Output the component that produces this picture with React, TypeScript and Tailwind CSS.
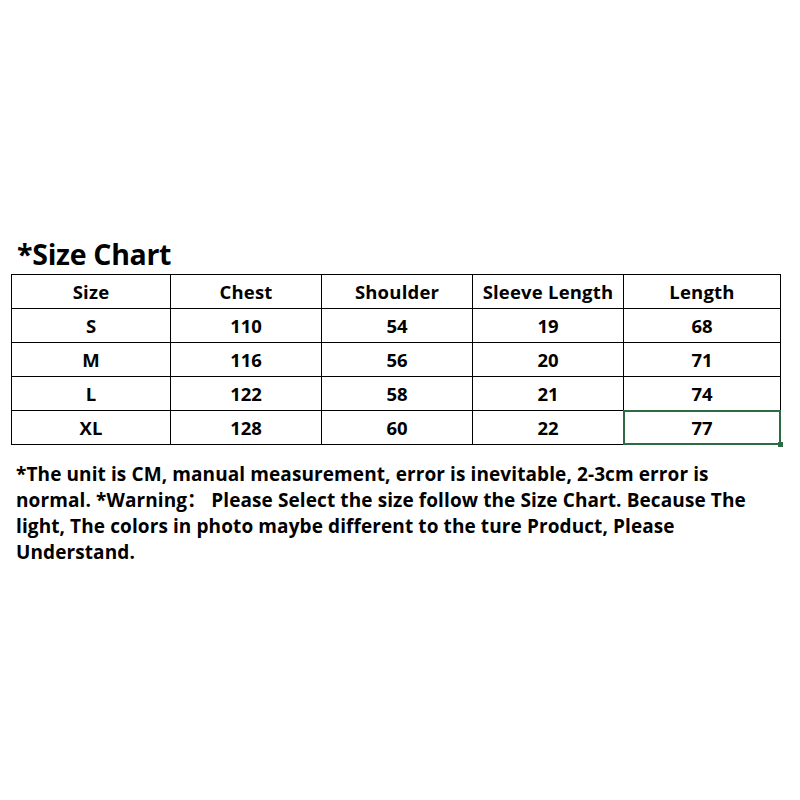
import React from 'react';

const columns = ['Size', 'Chest', 'Shoulder', 'Sleeve Length', 'Length'];
const widths = ['w-[159px]', 'w-[151px]', 'w-[151px]', 'w-[151px]', 'w-[157px]'];

const rows = [
  ['S', '110', '54', '19', '68'],
  ['M', '116', '56', '20', '71'],
  ['L', '122', '58', '21', '74'],
  ['XL', '128', '60', '22', '77'],
];

const noteLines = [
  '*The unit is CM, manual measurement, error is inevitable, 2-3cm error is',
  'normal. *Warning\uFF1A Please Select the size follow the Size Chart. Because The',
  'light, The colors in photo maybe different to the ture Product, Please',
  'Understand.',
];

export default function App() {
  return (
    <div className="h-[800px] w-[800px] bg-white text-black font-['Open_Sans','Noto_Sans_CJK_SC',sans-serif]">
      <div className="pt-[234px] pl-[17px]">
        <h1 className="h-[40px] text-[28.5px] font-bold leading-[40px] tracking-[-0.3px]">*Size Chart</h1>
      </div>

      <div className="ml-[11px] w-[770px]">
        <table className="border-collapse">
          <thead>
            <tr>
              {columns.map((c, i) => (
                <th
                  key={c}
                  className={`${widths[i]} h-[34px] border-[1.5px] border-black p-0 text-center text-[18.5px] font-bold tracking-[0.2px]`}
                >
                  {c}
                </th>
              ))}
            </tr>
          </thead>
          <tbody>
            {rows.map((r, ri) => (
              <tr key={r[0]}>
                {r.map((v, ci) => {
                  const selected = ri === rows.length - 1 && ci === r.length - 1;
                  return (
                    <td
                      key={ci}
                      className="relative h-[34px] border-[1.5px] border-black p-0 text-center text-[18.5px] font-bold"
                    >
                      {v}
                      {selected && (
                        <>
                          <span className="pointer-events-none absolute -inset-[1px] border-2 border-[#2e6b45]" />
                          <span className="absolute -bottom-[3px] -right-[3px] h-[5px] w-[5px] bg-[#2e6b45]" />
                        </>
                      )}
                    </td>
                  );
                })}
              </tr>
            ))}
          </tbody>
        </table>
      </div>

      <div className="mt-[16px] pl-[16px] text-[19px] font-bold leading-[26px] tracking-[0.1px]">
        {noteLines.map((l) => (
          <div key={l} className="whitespace-nowrap">
            {l}
          </div>
        ))}
      </div>
    </div>
  );
}
